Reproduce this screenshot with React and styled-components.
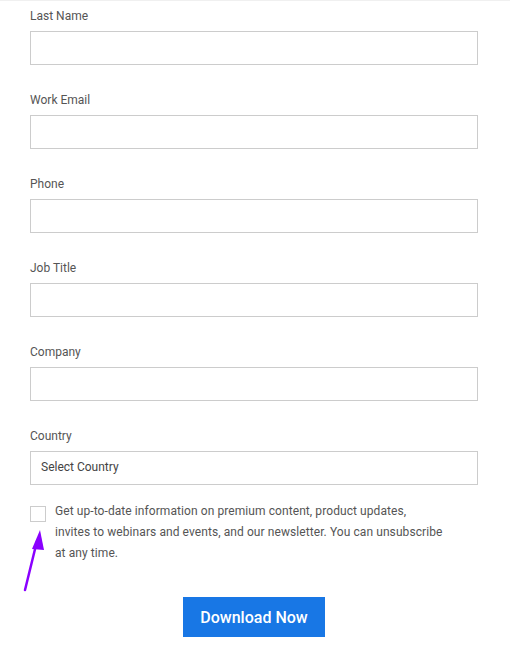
import React from "react";
import styled, { createGlobalStyle } from "styled-components";

const GlobalStyle = createGlobalStyle`
  html, body {
    margin: 0;
    padding: 0;
    background: #fff;
  }
  body {
    font-family: Roboto, "Liberation Sans", Arial, sans-serif;
    -webkit-font-smoothing: antialiased;
  }
`;

const Page = styled.div`
  position: relative;
  width: 510px;
  height: 668px;
  box-sizing: border-box;
  border-top: 1px solid #f0f0f0;
  overflow: hidden;
`;

const Form = styled.form`
  display: flex;
  flex-direction: column;
  width: 448px;
  padding: 7px 0 0 30px;
`;

const Field = styled.div`
  display: flex;
  flex-direction: column;
  margin-bottom: ${(p) => (p.last ? "16px" : "27px")};
`;

const Label = styled.label`
  font-size: 12px;
  line-height: 16px;
  color: #555;
  margin-bottom: 7px;
`;

const Input = styled.input`
  box-sizing: border-box;
  width: 448px;
  height: 34px;
  border: 1px solid #cccccc;
  border-radius: 0;
  background: #fff;
  outline: none;
  padding: 0 10px;
  font-family: inherit;
  font-size: 12px;
`;

const Select = styled.div`
  box-sizing: border-box;
  width: 448px;
  height: 34px;
  border: 1px solid #cccccc;
  display: flex;
  align-items: center;
  padding: 0 10px 2px;
  font-size: 12px;
  color: #444;
`;

const ConsentRow = styled.div`
  display: flex;
  align-items: flex-start;
  gap: 9px;
`;

const Box = styled.span`
  flex: none;
  box-sizing: border-box;
  width: 16px;
  height: 16px;
  margin-top: 5px;
  border: 1px solid #cccccc;
  background: #fff;
`;

const ConsentText = styled.p`
  margin: 0;
  width: 400px;
  font-size: 12px;
  line-height: 21px;
  letter-spacing: 0.08px;
  color: #555;
`;

const ButtonRow = styled.div`
  display: flex;
  justify-content: center;
  margin-top: 33px;
`;

const Button = styled.button`
  width: 142px;
  height: 40px;
  border: none;
  border-radius: 0;
  background: #1877e5;
  color: #fff;
  font-family: inherit;
  font-size: 16px;
  font-weight: 500;
  cursor: pointer;
`;

const Arrow = styled.svg`
  position: absolute;
  left: 18px;
  top: 524px;
  pointer-events: none;
`;

const fields = ["Last Name", "Work Email", "Phone", "Job Title", "Company"];

export default function App() {
  return (
    <Page>
      <GlobalStyle />
      <Form onSubmit={(e) => e.preventDefault()}>
        {fields.map((f) => (
          <Field key={f}>
            <Label>{f}</Label>
            <Input type="text" />
          </Field>
        ))}
        <Field last>
          <Label>Country</Label>
          <Select>Select Country</Select>
        </Field>
        <ConsentRow>
          <Box />
          <ConsentText>
            Get up-to-date information on premium content, product updates,
            <br />
            invites to webinars and events, and our newsletter. You can unsubscribe
            <br />
            at any time.
          </ConsentText>
        </ConsentRow>
        <ButtonRow>
          <Button type="submit">Download Now</Button>
        </ButtonRow>
      </Form>
      <Arrow width="34" height="70" viewBox="0 0 34 70">
        <line x1="7" y1="65" x2="19" y2="16" stroke="#8a00ff" strokeWidth="2.5" strokeLinecap="round" />
        <polygon points="22,5 14,24 26,25" fill="#8a00ff" />
      </Arrow>
    </Page>
  );
}
